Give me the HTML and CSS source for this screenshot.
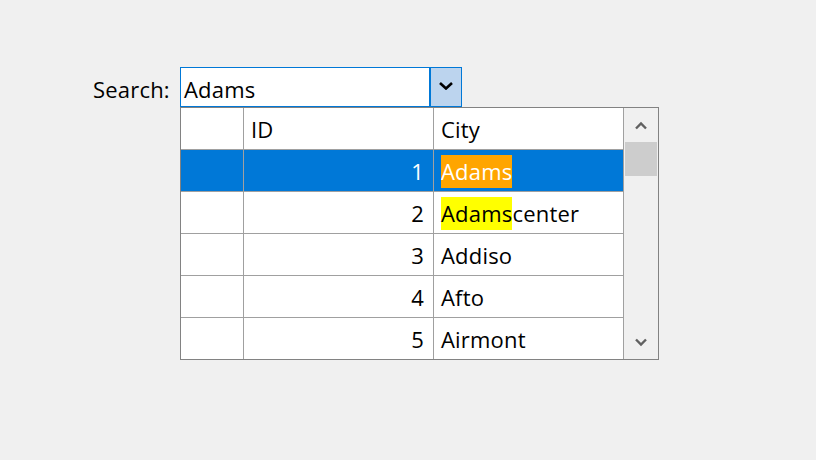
FILE: index.html
```html
<!DOCTYPE html>
<html>
<head>
<meta charset="utf-8">
<link rel="stylesheet" href="styles.css">
</head>
<body>
<div class="page">
  <div class="search-row">
    <div class="label">Search:</div>
    <div class="picker">
      <div class="combo">
        <div class="combo-text">Adams</div>
        <div class="combo-btn">
          <svg width="14" height="8" viewBox="0 0 14 8"><path d="M1 1 L7 6.5 L13 1" fill="none" stroke="#000" stroke-width="2.6"/></svg>
        </div>
      </div>
      <div class="grid">
        <div class="grid-body">
          <div class="row header">
            <div class="cell rh"></div>
            <div class="cell id">ID</div>
            <div class="cell city">City</div>
          </div>
          <div class="row selected">
            <div class="cell rh"></div>
            <div class="cell id num">1</div>
            <div class="cell city"><span class="hl hl-sel">Adams</span></div>
          </div>
          <div class="row">
            <div class="cell rh"></div>
            <div class="cell id num">2</div>
            <div class="cell city"><span class="hl hl-match">Adams</span>center</div>
          </div>
          <div class="row">
            <div class="cell rh"></div>
            <div class="cell id num">3</div>
            <div class="cell city">Addiso</div>
          </div>
          <div class="row">
            <div class="cell rh"></div>
            <div class="cell id num">4</div>
            <div class="cell city">Afto</div>
          </div>
          <div class="row last">
            <div class="cell rh"></div>
            <div class="cell id num">5</div>
            <div class="cell city">Airmont</div>
          </div>
        </div>
        <div class="scrollbar">
          <div class="sb-btn">
            <svg width="12" height="9" viewBox="0 0 12 9"><path d="M1 7.5 L6 2.5 L11 7.5" fill="none" stroke="#606060" stroke-width="2.4"/></svg>
          </div>
          <div class="sb-track"><div class="sb-thumb"></div></div>
          <div class="sb-btn">
            <svg width="12" height="9" viewBox="0 0 12 9"><path d="M1 1.5 L6 6.5 L11 1.5" fill="none" stroke="#606060" stroke-width="2.4"/></svg>
          </div>
        </div>
      </div>
    </div>
  </div>
</div>
</body>
</html>
```
FILE: styles.css
```css
* { box-sizing: border-box; }
html, body {
  margin: 0;
  padding: 0;
  background: #f0f0f0;
}
body {
  font-family: "Open Sans", "Noto Sans", sans-serif;
  font-size: 22px;
  letter-spacing: 0.2px;
  color: #000;
  width: 816px;
  height: 460px;
  overflow: hidden;
}
.page {
  padding: 67px 0 0 93px;
}
.search-row {
  display: flex;
  align-items: flex-start;
}
.label {
  width: 87px;
  height: 40px;
  line-height: 40px;
  padding-top: 2px;
}
.picker {
  display: flex;
  flex-direction: column;
  width: 479px;
}
.combo {
  width: 282px;
  height: 40px;
  border: 1px solid #0078d7;
  background: #fff;
  display: flex;
}
.combo-text {
  flex: 1;
  padding-left: 3px;
  padding-top: 2px;
  line-height: 38px;
}
.combo-btn {
  width: 33px;
  margin: -1px -1px -1px 0;
  border: 1px solid #0078d7;
  border-left-width: 2px;
  background: #bcd4ee;
  display: flex;
  align-items: center;
  justify-content: center;
}
.combo-btn svg { margin-left: -1px; margin-top: -3px; }
.grid {
  width: 479px;
  height: 253px;
  border: 1px solid #828282;
  background: #fff;
  display: flex;
}
.grid-body {
  width: 443px;
  display: flex;
  flex-direction: column;
}
.row {
  display: flex;
  height: 42px;
  border-bottom: 1px solid #a0a0a0;
}
.row.last {
  height: 41px;
  border-bottom: none;
}
.cell {
  height: 100%;
  border-right: 1px solid #a0a0a0;
  display: flex;
  align-items: center;
  padding-top: 1px;
}
.rh { width: 63px; }
.id { width: 190px; padding-left: 7px; }
.city { width: 190px; padding-left: 7px; white-space: nowrap; }
.num { justify-content: flex-end; padding-right: 9px; }
.selected { background: #0078d7; color: #fff; }
.hl {
  display: inline-block;
  height: 33px;
  line-height: 33px;
}
.hl-sel { background: #ffa500; color: #fff; }
.hl-match { background: #ffff00; }
.scrollbar {
  width: 34px;
  background: #f0f0f0;
  display: flex;
  flex-direction: column;
}
.sb-btn {
  height: 34px;
  display: flex;
  align-items: center;
  justify-content: center;
}
.sb-track {
  flex: 1;
  padding: 0 1px 0 1px;
}
.sb-thumb {
  height: 34px;
  background: #cdcdcd;
}
```
